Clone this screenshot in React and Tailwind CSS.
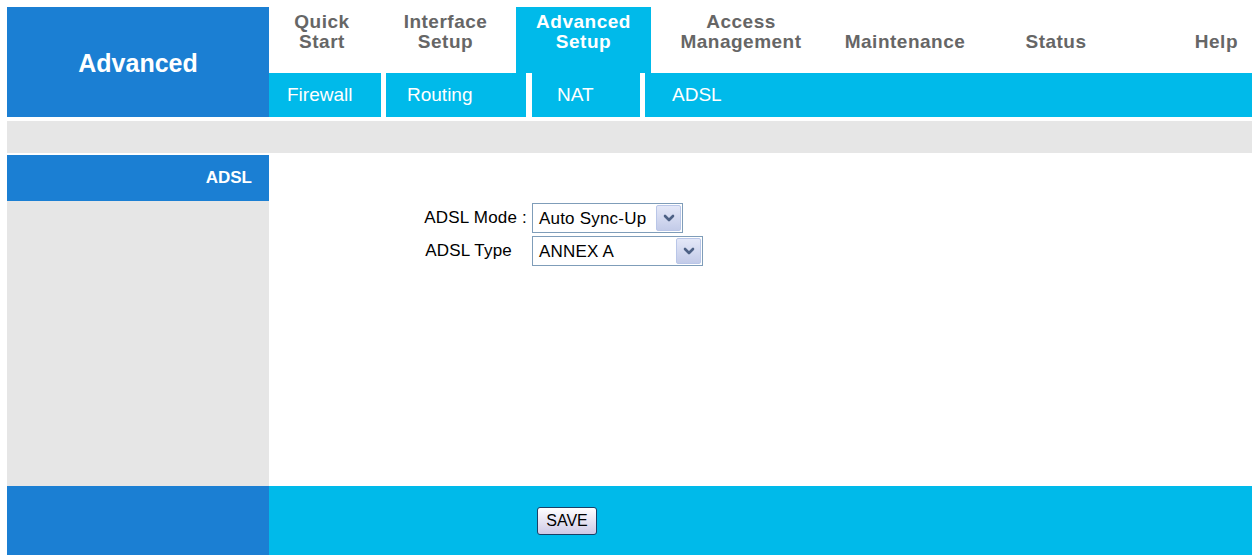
import React from "react";

const BLUE = "bg-[#1b7fd3]";
const CYAN = "bg-[#00baea]";

function Chevron() {
  return (
    <svg width="12" height="10" viewBox="0 0 12 10" className="block">
      <path d="M2 3 L6 7 L10 3" stroke="#4d6185" strokeWidth="2.6" fill="none" strokeLinecap="round" strokeLinejoin="round" />
    </svg>
  );
}

function FakeSelect({ value, width }) {
  return (
    <div className={`flex items-center h-[30px] border border-[#7f9db9] bg-white ${width}`}>
      <span className="flex-1 pl-[6px] text-[17px] text-black leading-none">{value}</span>
      <span className="mr-[1px] flex h-[26px] w-[25px] items-center justify-center rounded-[2px] border border-[#b9c6e8] bg-gradient-to-b from-[#e4e8f8] to-[#c3cbe8]">
        <Chevron />
      </span>
    </div>
  );
}

export default function App() {
  return (
    <div className="min-h-[560px] bg-white pl-[7px] pt-[7px]" style={{ fontFamily: '"Liberation Sans", Arial, sans-serif' }}>
      <div className="w-[1245px]">
        {/* header */}
        <div className="flex h-[110px]">
          <div className={`flex w-[262px] items-center justify-center ${BLUE}`}>
            <span className="pt-[4px] text-[25px] font-bold text-white">Advanced</span>
          </div>
          <div className="flex flex-1 flex-col">
            <div className="flex h-[66px] text-[19px] font-bold leading-[20px] tracking-[0.5px] text-[#666666]">
              <div className="flex w-[106px] items-center justify-center pb-[17px] text-center">Quick<br />Start</div>
              <div className="flex w-[141px] items-center justify-center pb-[17px] text-center">Interface<br />Setup</div>
              <div className={`flex w-[135px] items-center justify-center pb-[17px] text-center text-white ${CYAN}`}>Advanced<br />Setup</div>
              <div className="flex w-[180px] items-center justify-center pb-[17px] text-center">Access<br />Management</div>
              <div className="flex w-[148px] items-center justify-center pt-[4px] text-center">Maintenance</div>
              <div className="flex w-[154px] items-center justify-center pt-[4px] text-center">Status</div>
              <div className="flex flex-1 items-center justify-end pr-[14px] pt-[4px]">Help</div>
            </div>
            <div className={`flex h-[44px] text-[19px] text-white ${CYAN}`}>
              <div className="flex w-[112px] items-center pl-[18px]">Firewall</div>
              <div className="w-[5px] bg-white" />
              <div className="flex w-[140px] items-center pl-[21px]">Routing</div>
              <div className="w-[6px] bg-white" />
              <div className="flex w-[108px] items-center pl-[25px]">NAT</div>
              <div className="w-[5px] bg-white" />
              <div className="flex flex-1 items-center pl-[27px]">ADSL</div>
            </div>
          </div>
        </div>

        {/* gray strip */}
        <div className="mt-[4px] h-[32px] bg-[#e6e6e6]" />

        {/* body */}
        <div className="mt-[2px] flex h-[331px]">
          <div className="flex w-[262px] flex-col bg-[#e6e6e6]">
            <div className={`flex h-[46px] items-center justify-end pr-[17px] text-[17px] font-bold text-white ${BLUE}`}>ADSL</div>
          </div>
          <div className="flex-1 pt-[48px]">
            <div className="grid grid-cols-[263px_auto] gap-y-[3px] text-[17px] tracking-[0.2px] text-black">
              <div className="flex h-[30px] items-center justify-end pr-[5px]">ADSL Mode :</div>
              <div><FakeSelect value="Auto Sync-Up" width="w-[151px]" /></div>
              <div className="flex h-[30px] items-center justify-end pr-[20px]">ADSL Type</div>
              <div><FakeSelect value="ANNEX A" width="w-[171px]" /></div>
            </div>
          </div>
        </div>

        {/* footer */}
        <div className="flex h-[69px]">
          <div className={`w-[262px] ${BLUE}`} />
          <div className={`flex flex-1 items-center pl-[268px] ${CYAN}`}>
            <button className="h-[28px] w-[60px] rounded-[3px] border border-[#1c3f66] bg-gradient-to-b from-white to-[#cfc9e6] text-[16px] text-black">
              SAVE
            </button>
          </div>
        </div>
      </div>
    </div>
  );
}
